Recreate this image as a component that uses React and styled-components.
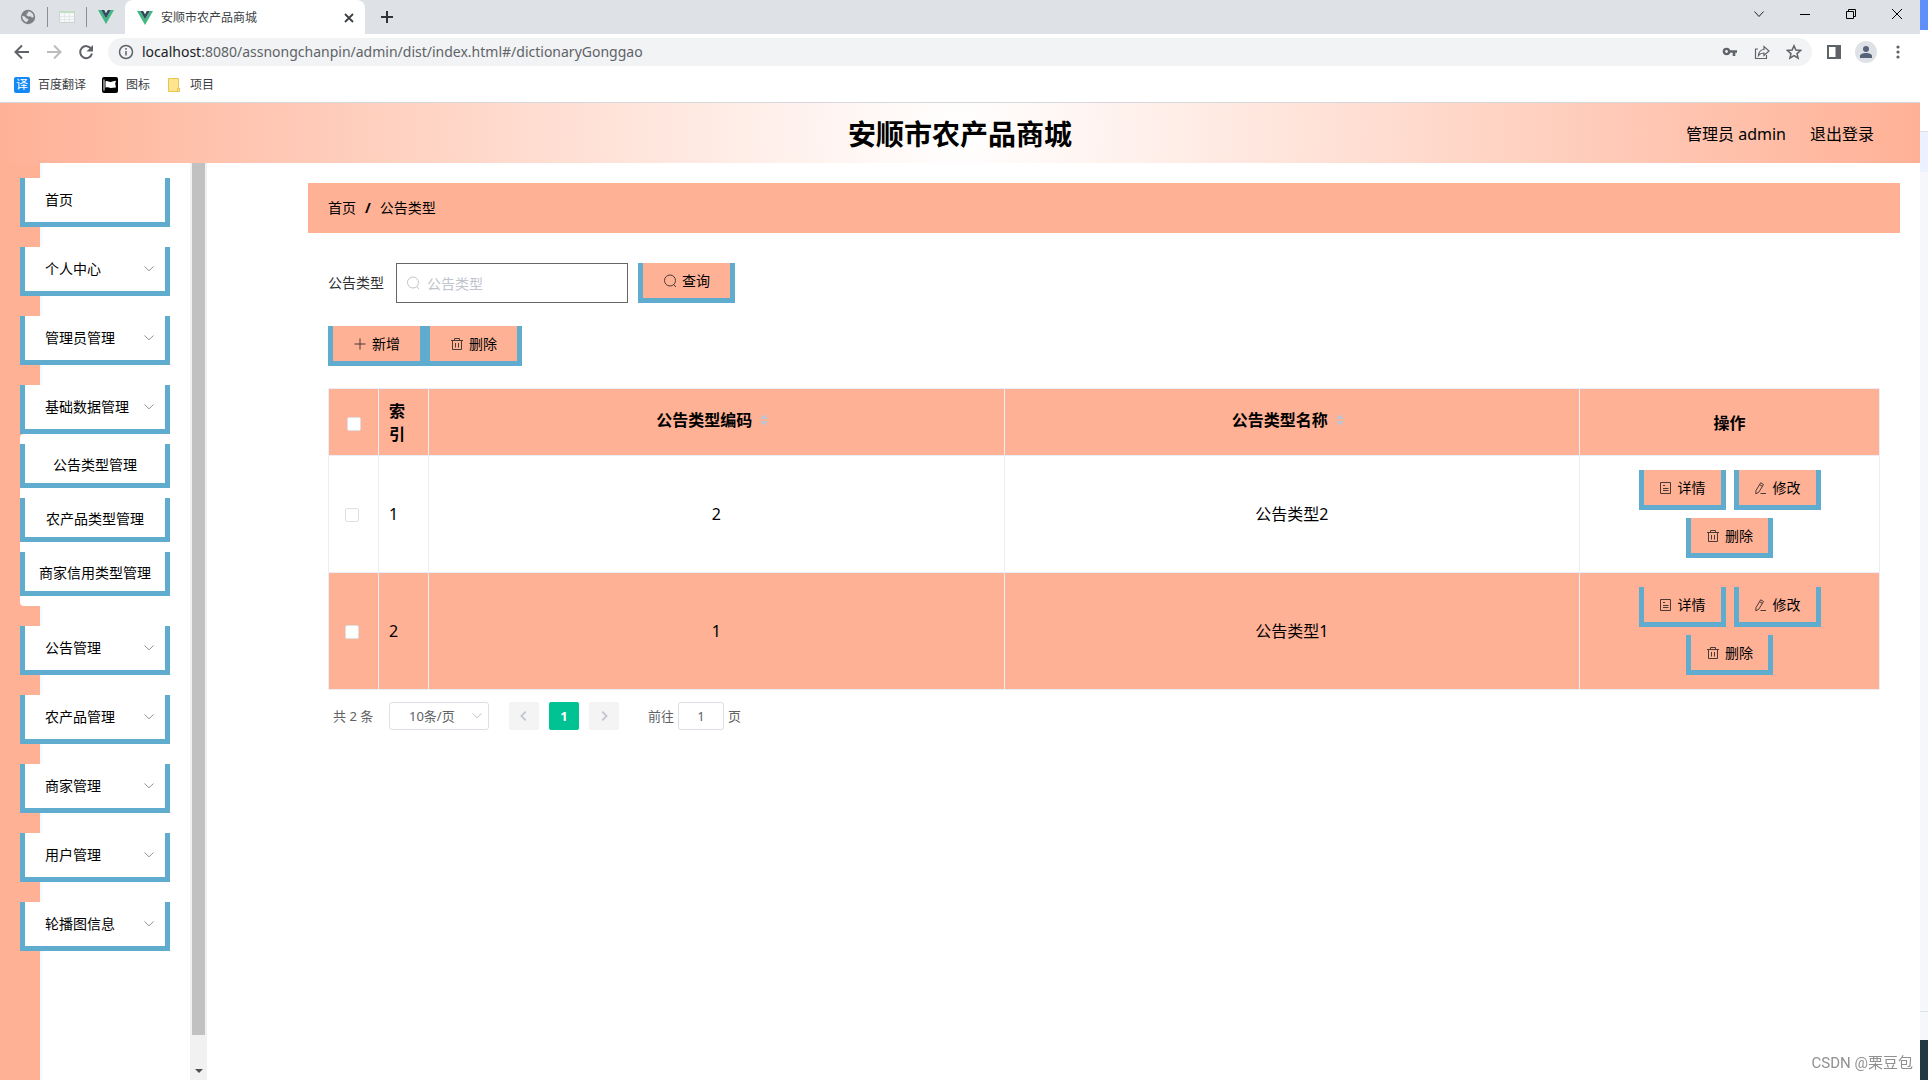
import React, { useState } from "react";
import styled, { createGlobalStyle } from "styled-components";

const peach = "#ffb196";
const blue = "#5facce";
const line = "#ebeef5";

const GlobalStyle = createGlobalStyle`
  *, *::before, *::after { box-sizing: border-box; }
  body {
    margin: 0;
    background: #fff;
    color: #000;
    font: 14px/20px "Noto Sans", "Noto Sans CJK SC", sans-serif;
    overflow: hidden;
  }
  button, input, select { font: inherit; color: inherit; margin: 0; }
  button { cursor: pointer; }
  a { color: inherit; text-decoration: none; }
`;

/* ---------- shell ---------- */

const Desktop = styled.div`
  display: flex;
  height: 100vh;
`;

const Browser = styled.div`
  flex: 1;
  min-width: 0;
  display: flex;
  flex-direction: column;
`;

const Behind = styled.div`
  width: 8px;
  display: flex;
  flex-direction: column;
  background: #f5f7fa;
`;

const BehindPart = styled.div`
  height: ${(p) => p.$height}px;
  flex: ${(p) => (p.$grow ? 1 : "none")};
  background: ${(p) => p.$color};
  border-bottom: ${(p) => (p.$ruled ? "1px solid #dcdfe3" : "none")};
`;

const TabStrip = styled.div`
  display: flex;
  height: 34px;
  background: #dee1e6;
`;

const PinnedTabs = styled.div`
  display: flex;
  align-items: center;
  padding: 0 11px 0 20px;
`;

const PinnedTab = styled.button`
  display: flex;
  padding: 0 11px 0 0;
  border: 0;
  background: none;
`;

const PinDivider = styled.span`
  width: 1px;
  height: 20px;
  margin-right: 11px;
  background: #8b8f94;
`;

const ActiveTab = styled.div`
  display: flex;
  align-items: center;
  gap: 8px;
  width: 240px;
  padding: 1px 8px 0 12px;
  border-radius: 8px 8px 0 0;
  background: #fff;
  font-size: 12px;
  color: #3c4043;
`;

const TabTitle = styled.span`
  flex: 1;
`;

const ChromeButton = styled.button`
  display: flex;
  align-items: center;
  justify-content: center;
  width: ${(p) => p.$width || 32}px;
  height: 28px;
  padding: 0;
  border: 0;
  background: none;
  color: ${(p) => p.$color || "#5f6368"};
`;

const NewTab = styled(ChromeButton)`
  height: 34px;
`;

const ButtonGroup = styled.div`
  display: flex;
  margin-left: auto;
`;

const Toolbar = styled.div`
  display: flex;
  align-items: center;
  height: 36px;
  padding: 0 6px;
`;

const AddressBar = styled.div`
  flex: 1;
  display: flex;
  align-items: center;
  gap: 8px;
  height: 28px;
  margin: 0 6px;
  padding: 0 2px 0 10px;
  border-radius: 14px;
  background: #f1f3f4;
  color: #5f6368;
`;

const Url = styled.span`
  flex: 1;
`;

const Host = styled.span`
  color: #202124;
`;

const Avatar = styled.span`
  display: flex;
  align-items: center;
  justify-content: center;
  width: 22px;
  height: 22px;
  border-radius: 50%;
  background: #dee1e6;
`;

const Bookmarks = styled.nav`
  display: flex;
  align-items: center;
  gap: 16px;
  height: 33px;
  padding: 0 14px 3px;
  border-bottom: 1px solid #d5d8dc;
  font-size: 12px;
  color: #3c4043;
`;

const Bookmark = styled.a`
  display: flex;
  align-items: center;
  gap: 8px;
`;

const TranslateBadge = styled.span`
  width: 16px;
  height: 16px;
  border-radius: 2px;
  background: #1488f5;
  color: #fff;
  font-size: 12px;
  line-height: 16px;
  text-align: center;
`;

/* ---------- application ---------- */

const Header = styled.header`
  display: grid;
  grid-template-columns: 1fr auto 1fr;
  align-items: center;
  height: 60px;
  padding: 2px 46px 0;
  background: radial-gradient(circle, #fff, ${peach});
`;

const Title = styled.h1`
  grid-column: 2;
  margin: 0;
  font-size: 28px;
  line-height: 40px;
  font-weight: 700;
`;

const Account = styled.div`
  display: flex;
  justify-content: flex-end;
  gap: 24px;
  font-size: 16px;
`;

const Body = styled.div`
  flex: 1;
  min-height: 0;
  display: flex;
`;

const Sidebar = styled.aside`
  display: flex;
  width: 207px;
  background: linear-gradient(to right, ${peach} 40px, #f0f8ff 40px, #fff 44px);
`;

const Menu = styled.ul`
  flex: 1;
  margin: 0;
  padding: 15px 20px;
  list-style: none;
`;

const MenuEntry = styled.li`
  margin-bottom: 20px;
`;

const MenuButton = styled.button`
  display: flex;
  align-items: center;
  justify-content: space-between;
  width: 100%;
  height: 49px;
  padding: 0 10px 0 20px;
  border: 5px solid ${blue};
  border-top: 0;
  background: #fff;
  color: #000;
`;

const SubMenu = styled.ul`
  display: flex;
  flex-direction: column;
  gap: 10px;
  margin: 0;
  padding: 10px 0;
  border-radius: 4px;
  background: #fff;
  list-style: none;
`;

const SubLink = styled.a`
  display: flex;
  align-items: center;
  justify-content: center;
  height: 44px;
  padding-top: 3px;
  border: 5px solid ${blue};
  border-top: 0;
  background: #fff;
  white-space: nowrap;
`;

const ScrollTrack = styled.div`
  display: flex;
  flex-direction: column;
  align-items: center;
  width: 17px;
  background: #f1f1f1;
`;

const ScrollThumb = styled.div`
  flex: 1;
  width: 13px;
  margin-bottom: 27px;
  background: #c1c1c1;
`;

const ScrollArrow = styled.div`
  height: 18px;
  display: flex;
  align-items: center;
`;

const Content = styled.main`
  flex: 1;
  min-width: 0;
  padding: 20px 20px 20px 101px;
`;

const Breadcrumb = styled.nav`
  display: flex;
  align-items: center;
  gap: 9px;
  height: 50px;
  padding: 0 20px;
  background: ${peach};
`;

const Slash = styled.span`
  font-weight: 700;
`;

const Panel = styled.section`
  padding: 30px 20px 0;
`;

const SearchForm = styled.form`
  display: flex;
  align-items: center;
  margin-bottom: 23px;
`;

const FieldLabel = styled.label`
  padding-right: 12px;
  color: #303133;
`;

const SearchBox = styled.div`
  display: grid;
  align-items: center;
  width: 232px;
  height: 40px;
  margin-right: 10px;
  > * { grid-area: 1 / 1; }
  > svg { margin-left: 10px; color: #c0c4cc; pointer-events: none; }
`;

const SearchInput = styled.input`
  width: 100%;
  height: 40px;
  padding: 0 15px 0 30px;
  border: 1px solid #666;
  background: transparent;
  outline: 0;
  &::placeholder { color: #c0c4cc; opacity: 1; }
`;

const ActionButton = styled.button`
  display: inline-flex;
  align-items: center;
  gap: 5px;
  height: 40px;
  padding: 0 ${(p) => (p.$small ? 15 : 20)}px;
  border: 5px solid ${blue};
  border-top: 0;
  background: ${peach};
  color: #000;
  font-size: 14px;
  line-height: 20px;
  white-space: nowrap;
  > svg { color: #4b3a35; }
`;

const ButtonRow = styled.div`
  display: flex;
  margin-bottom: 22px;
`;

const RowActions = styled.div`
  display: flex;
  flex-wrap: wrap;
  justify-content: center;
  gap: 8px;
  padding: 0 40px;
`;

const Table = styled.table`
  width: 100%;
  table-layout: fixed;
  border-collapse: collapse;
  font-size: 16px;
  line-height: 23px;
`;

const Col = styled.col`
  width: ${(p) => (p.$width ? `${p.$width}px` : "auto")};
`;

const Th = styled.th`
  padding: 11px 10px 9px;
  border: 1px solid ${line};
  background: ${peach};
  text-align: ${(p) => p.$align || "center"};
  font-weight: 700;
`;

const SortLabel = styled.span`
  display: flex;
  align-items: center;
  justify-content: center;
  gap: 5px;
  padding: 0 5px 6px 0;
`;

const Tr = styled.tr`
  background: ${(p) => (p.$striped ? peach : "#fff")};
`;

const Td = styled.td`
  padding: 14px 10px;
  border: 1px solid ${line};
  text-align: ${(p) => p.$align || "center"};
`;

const Checkbox = styled.input`
  appearance: none;
  display: inline-block;
  width: 14px;
  height: 14px;
  border: 1px solid #dcdfe6;
  border-radius: 2px;
  background: #fff;
  vertical-align: middle;
  &:checked { background: #00c292; }
`;

const CheckWrap = styled.div`
  padding-left: 6px;
`;

const Pagination = styled.div`
  display: flex;
  align-items: center;
  padding: 12px 5px 0;
  font-size: 13px;
  color: #606266;
`;

const Total = styled.span`
  width: 56px;
`;

const SelectBox = styled.div`
  display: grid;
  align-items: center;
  width: 100px;
  margin-right: 20px;
  > * { grid-area: 1 / 1; }
  > svg { justify-self: end; margin-right: 6px; color: #c0c4cc; pointer-events: none; }
`;

const PageSize = styled.select`
  appearance: none;
  width: 100%;
  height: 28px;
  padding: 0 19px;
  border: 1px solid #dcdfe6;
  border-radius: 3px;
  background: #fff;
`;

const Pager = styled.div`
  display: flex;
  gap: 10px;
  margin-right: 29px;
`;

const PageButton = styled.button`
  display: flex;
  align-items: center;
  justify-content: center;
  width: 30px;
  height: 28px;
  padding: 0;
  border: 0;
  border-radius: 2px;
  background: ${(p) => (p.$active ? "#00c292" : "#f4f4f5")};
  color: ${(p) => (p.$active ? "#fff" : "#c0c4cc")};
  font-weight: 700;
`;

const Jump = styled.label`
  display: flex;
  align-items: center;
  gap: 4px;
`;

const JumpInput = styled.input`
  width: 46px;
  height: 28px;
  border: 1px solid #dcdfe6;
  border-radius: 3px;
  text-align: center;
`;

const Watermark = styled.div`
  position: fixed;
  right: 15px;
  bottom: 7px;
  font: 14px/20px Roboto, "Noto Sans CJK SC", sans-serif;
  font-size: 15px;
  color: #909090;
`;

/* ---------- icons ---------- */

const Svg = ({ size = 14, box = 14, width = 1, children }) => (
  <svg
    width={size}
    height={size}
    viewBox={`0 0 ${box} ${box}`}
    fill="none"
    stroke="currentColor"
    strokeWidth={width}
    aria-hidden="true"
  >
    {children}
  </svg>
);

const SearchIcon = () => (
  <Svg><circle cx="7" cy="6.5" r="5.5" /><path d="M10.5 10.5l2.5 2.5" /></Svg>
);
const PlusIcon = () => <Svg><path d="M7 1.5v11M1.5 7h11" /></Svg>;
const TrashIcon = () => (
  <Svg><path d="M1 3.5h12M4.5 3V1.5h5V3M2.5 3.5v9h9v-9M5.5 6v4.5M8.5 6v4.5" /></Svg>
);
const DocIcon = () => (
  <Svg><path d="M1.500 1.500h10v11h-10zM4 4.500h2M4 7.500h5.500M4 9.500h5.500" /></Svg>
);
const EditIcon = () => (
  <Svg><path d="M2 9.500L6.700 1.800l2.800 1.700-4.700 7.700-3 1.600zM5.500 3.600l2.800 1.700M6.500 12.500H12" /></Svg>
);
const Chevron = ({ color = "#909399" }) => (
  <svg width="12" height="12" viewBox="0 0 12 12" fill="none" stroke={color} aria-hidden="true">
    <path d="M1.500 3.500L6 7.800l4.500-4.300" />
  </svg>
);
const SortIcon = () => (
  <svg width="14" height="14" viewBox="0 0 14 14" fill="#c0c4cc" aria-hidden="true">
    <path d="M2.500 6L7 1.500 11.500 6zM2.500 8h9L7 12.500z" />
  </svg>
);
const VueIcon = () => (
  <svg width="16" height="16" viewBox="0 0 16 16" aria-hidden="true">
    <path fill="#41b883" d="M0 1h3.200L8 9.300 12.800 1H16L8 15z" />
    <path fill="#35495e" d="M3.200 1h3L8 4.200 9.800 1h3L8 9.300z" />
  </svg>
);
const GlobeIcon = () => (
  <svg width="16" height="16" viewBox="0 0 16 16" aria-hidden="true">
    <circle cx="8" cy="8" r="7.200" fill="#7d7f82" />
    <path fill="#dee1e6" d="M2.200 6.800l2.600.8 1.700 1.900 1.900.5-.3 1.500-1.600 1.700C3.800 12.300 2 9.800 2.200 6.800zM7.500 2.400l2.900.4 2.500 2.300.8 2.600-1.600 1-1.600-1.500-2.300.2-1.700-1.100.2-1.700 1.600-.4z" />
  </svg>
);
const SheetIcon = () => (
  <svg width="16" height="16" viewBox="0 0 16 16" aria-hidden="true">
    <path fill="#f6f7f7" stroke="#cfd1d3" d="M.5 2.500h15v11H.5z" />
    <path fill="#bfe0c4" d="M0 2h16v2H0z" />
    <path stroke="#e6e8ea" d="M1 7.500h14M1 10.500h14M5.500 4v9M10.500 4v9" />
  </svg>
);
const FlagIcon = () => (
  <svg width="16" height="16" viewBox="0 0 16 16" aria-hidden="true">
    <rect width="16" height="16" rx="2" />
    <path fill="#fff" d="M1.500 2.500h1v11h-1zM3.500 4.500c2-1.200 3.200.7 5 .5 1.500-.2 3.500-1 5.500-1.200l-.8 3 .8 3.700c-2-.2-3.500.5-5.200.4-2-.2-3.300-1-5.300-.2z" />
  </svg>
);
const FolderIcon = () => (
  <svg width="16" height="16" viewBox="0 0 16 16" aria-hidden="true">
    <path fill="#ffe58f" stroke="#e8c552" d="M2.500 1.500h10v9l1 1v3h-11z" />
    <path fill="#ffe58f" stroke="#e8c552" d="M11.500 14.500v-3h2v3z" />
  </svg>
);
const ArrowIcon = ({ flip }) => (
  <Svg size={16} box={16} width={2}>
    <path d={flip ? "M1 8h13M8 1.500L14.500 8 8 14.500" : "M15 8H2M8 1.500L1.500 8 8 14.500"} />
  </Svg>
);
const ReloadIcon = () => (
  <svg width="16" height="16" viewBox="0 0 16 16" fill="none" stroke="currentColor" strokeWidth="2" aria-hidden="true">
    <path d="M13.300 5A6 6 0 1 0 14 9.500" />
    <path fill="currentColor" stroke="none" d="M15 1v6.500H8.500z" />
  </svg>
);
const InfoIcon = () => (
  <Svg size={16} box={16} width={1.5}><circle cx="8" cy="8" r="6.500" /><path d="M8 7v4.500M8 4v1.800" /></Svg>
);
const KeyIcon = () => (
  <svg width="16" height="16" viewBox="0 0 16 16" fill="none" stroke="currentColor" aria-hidden="true">
    <circle cx="4.500" cy="7.500" r="2.600" strokeWidth="2.400" />
    <path strokeWidth="2.600" d="M7.500 7.500H15M12 8v4" />
  </svg>
);
const ShareIcon = () => (
  <Svg size={16} box={16} width={1.2}>
    <path d="M4 5H1.500v9.500h11V11M4.500 11.500c.5-4 2.500-6 5.500-6V2.500l5 4.500-5 4.500V9c-2.500 0-4 .5-5.500 2.500z" />
  </Svg>
);
const StarIcon = () => (
  <Svg size={16} box={16} width={1.5}>
    <path d="M8 1.800l1.900 4.300 4.700.4-3.600 3.100 1.100 4.600L8 11.700l-4.100 2.500L5 9.600 1.400 6.500l4.700-.4z" />
  </Svg>
);
const PanelIcon = () => (
  <svg width="14" height="14" viewBox="0 0 14 14" aria-hidden="true">
    <path fill="#5f6368" d="M0 0h14v14H0zM2 2v10h6.500V2z" fillRule="evenodd" />
  </svg>
);
const PersonIcon = () => (
  <svg width="14" height="14" viewBox="0 0 14 14" fill="#56637a" aria-hidden="true">
    <circle cx="7" cy="4" r="3" /><path d="M1 13v-2c0-2 3-3 6-3s6 1 6 3v2z" />
  </svg>
);
const DotsIcon = () => (
  <svg width="14" height="14" viewBox="0 0 14 14" fill="#5f6368" aria-hidden="true">
    <circle cx="7" cy="2" r="1.600" /><circle cx="7" cy="7" r="1.600" /><circle cx="7" cy="12" r="1.600" />
  </svg>
);

/* ---------- data ---------- */

const menu = [
  { label: "首页", leaf: true },
  { label: "个人中心" },
  { label: "管理员管理" },
  { label: "基础数据管理", children: ["公告类型管理", "农产品类型管理", "商家信用类型管理"] },
  { label: "公告管理" },
  { label: "农产品管理" },
  { label: "商家管理" },
  { label: "用户管理" },
  { label: "轮播图信息" },
];

const rows = [
  { id: 1, code: "2", name: "公告类型2" },
  { id: 2, code: "1", name: "公告类型1" },
];

function BrowserChrome() {
  return (
    <>
      <TabStrip>
        <PinnedTabs>
          <PinnedTab aria-label="网页"><GlobeIcon /></PinnedTab>
          <PinDivider />
          <PinnedTab aria-label="表格"><SheetIcon /></PinnedTab>
          <PinDivider />
          <VueIcon />
        </PinnedTabs>
        <ActiveTab>
          <VueIcon />
          <TabTitle>安顺市农产品商城</TabTitle>
          <ChromeButton $width={16} $color="#3c4043" aria-label="关闭标签页">
            <Svg width={1.8}><path d="M3 3l8 8M11 3l-8 8" /></Svg>
          </ChromeButton>
        </ActiveTab>
        <NewTab $width={44} $color="#2f3337" aria-label="新标签页">
          <Svg width={2}><path d="M7 1v12M1 7h12" /></Svg>
        </NewTab>
        <ButtonGroup>
          <ChromeButton $width={46} $color="#222" aria-label="搜索标签页">
            <Svg><path d="M2.500 4.500L7 9.500l4.500-5" /></Svg>
          </ChromeButton>
          <ChromeButton $width={46} $color="#000" aria-label="最小化">
            <Svg><path d="M2 7.500h10" /></Svg>
          </ChromeButton>
          <ChromeButton $width={46} $color="#000" aria-label="还原">
            <Svg><path d="M2.500 4.500h7v7h-7zM4.500 4V2.500h7v7H10" /></Svg>
          </ChromeButton>
          <ChromeButton $width={46} $color="#000" aria-label="关闭">
            <Svg><path d="M2 2l10 10M12 2L2 12" /></Svg>
          </ChromeButton>
        </ButtonGroup>
      </TabStrip>
      <Toolbar>
        <ChromeButton aria-label="后退"><ArrowIcon /></ChromeButton>
        <ChromeButton $color="#babcbe" aria-label="前进"><ArrowIcon flip /></ChromeButton>
        <ChromeButton aria-label="刷新"><ReloadIcon /></ChromeButton>
        <AddressBar>
          <InfoIcon />
          <Url><Host>localhost</Host>:8080/assnongchanpin/admin/dist/index.html#/dictionaryGonggao</Url>
          <ButtonGroup>
            <ChromeButton aria-label="密码"><KeyIcon /></ChromeButton>
            <ChromeButton aria-label="分享"><ShareIcon /></ChromeButton>
            <ChromeButton aria-label="收藏"><StarIcon /></ChromeButton>
          </ButtonGroup>
        </AddressBar>
        <ChromeButton aria-label="侧边栏"><PanelIcon /></ChromeButton>
        <ChromeButton aria-label="用户"><Avatar><PersonIcon /></Avatar></ChromeButton>
        <ChromeButton aria-label="更多"><DotsIcon /></ChromeButton>
      </Toolbar>
      <Bookmarks>
        <Bookmark href="#fanyi"><TranslateBadge>译</TranslateBadge>百度翻译</Bookmark>
        <Bookmark href="#tubiao"><FlagIcon />图标</Bookmark>
        <Bookmark href="#xiangmu"><FolderIcon />项目</Bookmark>
      </Bookmarks>
    </>
  );
}

function SideMenu() {
  return (
    <Sidebar>
      <Menu>
        {menu.map((item) => (
          <MenuEntry key={item.label}>
            <MenuButton>
              {item.label}
              {!item.leaf && <Chevron />}
            </MenuButton>
            {item.children && (
              <SubMenu>
                {item.children.map((name) => (
                  <li key={name}><SubLink href="#/dictionaryGonggao">{name}</SubLink></li>
                ))}
              </SubMenu>
            )}
          </MenuEntry>
        ))}
      </Menu>
      <ScrollTrack>
        <ScrollThumb />
        <ScrollArrow>
          <svg width="8" height="4" viewBox="0 0 8 4" aria-hidden="true"><path fill="#505050" d="M0 0h8L4 4z" /></svg>
        </ScrollArrow>
      </ScrollTrack>
    </Sidebar>
  );
}

function DataTable() {
  return (
    <Table>
      <colgroup>
        <Col $width={50} /><Col $width={50} /><Col /><Col /><Col $width={300} />
      </colgroup>
      <thead>
        <tr>
          <Th><Checkbox type="checkbox" aria-label="全选" /></Th>
          <Th $align="left">索引</Th>
          <Th><SortLabel>公告类型编码<SortIcon /></SortLabel></Th>
          <Th><SortLabel>公告类型名称<SortIcon /></SortLabel></Th>
          <Th>操作</Th>
        </tr>
      </thead>
      <tbody>
        {rows.map((row, i) => (
          <Tr key={row.id} $striped={i % 2 === 1}>
            <Td $align="left">
              <CheckWrap><Checkbox type="checkbox" aria-label={`选择 ${row.id}`} /></CheckWrap>
            </Td>
            <Td $align="left">{row.id}</Td>
            <Td>{row.code}</Td>
            <Td>{row.name}</Td>
            <Td>
              <RowActions>
                <ActionButton $small><DocIcon />详情</ActionButton>
                <ActionButton $small><EditIcon />修改</ActionButton>
                <ActionButton $small><TrashIcon />删除</ActionButton>
              </RowActions>
            </Td>
          </Tr>
        ))}
      </tbody>
    </Table>
  );
}

export default function App() {
  const [keyword, setKeyword] = useState("");
  const [page, setPage] = useState("1");
  return (
    <>
      <GlobalStyle />
      <Desktop>
        <Browser>
          <BrowserChrome />
          <Header>
            <Title>安顺市农产品商城</Title>
            <Account><span>管理员 admin</span><a href="#/login">退出登录</a></Account>
          </Header>
          <Body>
            <SideMenu />
            <Content>
              <Breadcrumb>
                <a href="#/">首页</a><Slash>/</Slash><span>公告类型</span>
              </Breadcrumb>
              <Panel>
                <SearchForm onSubmit={(e) => e.preventDefault()}>
                  <FieldLabel htmlFor="type">公告类型</FieldLabel>
                  <SearchBox>
                    <SearchInput id="type" placeholder="公告类型" value={keyword} onChange={(e) => setKeyword(e.target.value)} />
                    <SearchIcon />
                  </SearchBox>
                  <ActionButton><SearchIcon />查询</ActionButton>
                </SearchForm>
                <ButtonRow>
                  <ActionButton><PlusIcon />新增</ActionButton>
                  <ActionButton><TrashIcon />删除</ActionButton>
                </ButtonRow>
                <DataTable />
                <Pagination>
                  <Total>共 2 条</Total>
                  <SelectBox>
                    <PageSize aria-label="每页条数"><option>10条/页</option><option>20条/页</option></PageSize>
                    <Chevron color="#c0c4cc" />
                  </SelectBox>
                  <Pager>
                    <PageButton aria-label="上一页"><Svg size={12} width={2}><path d="M9 2L4 7l5 5" /></Svg></PageButton>
                    <PageButton $active>1</PageButton>
                    <PageButton aria-label="下一页"><Svg size={12} width={2}><path d="M5 2l5 5-5 5" /></Svg></PageButton>
                  </Pager>
                  <Jump>前往<JumpInput value={page} onChange={(e) => setPage(e.target.value)} />页</Jump>
                </Pagination>
              </Panel>
            </Content>
          </Body>
        </Browser>
        <Behind>
          <BehindPart $height={30} $color="#5f8ffa" />
          <BehindPart $height={102} $color="#fff" $ruled />
          <BehindPart $height={40} $color="#ebf1fe" />
          <BehindPart $grow $ruled $color="#f5f7fa" />
          <BehindPart $height={28} $color="#f5f7fa" />
          <BehindPart $height={40} $color="#213a41" />
        </Behind>
      </Desktop>
      <Watermark>CSDN @栗豆包</Watermark>
    </>
  );
}
